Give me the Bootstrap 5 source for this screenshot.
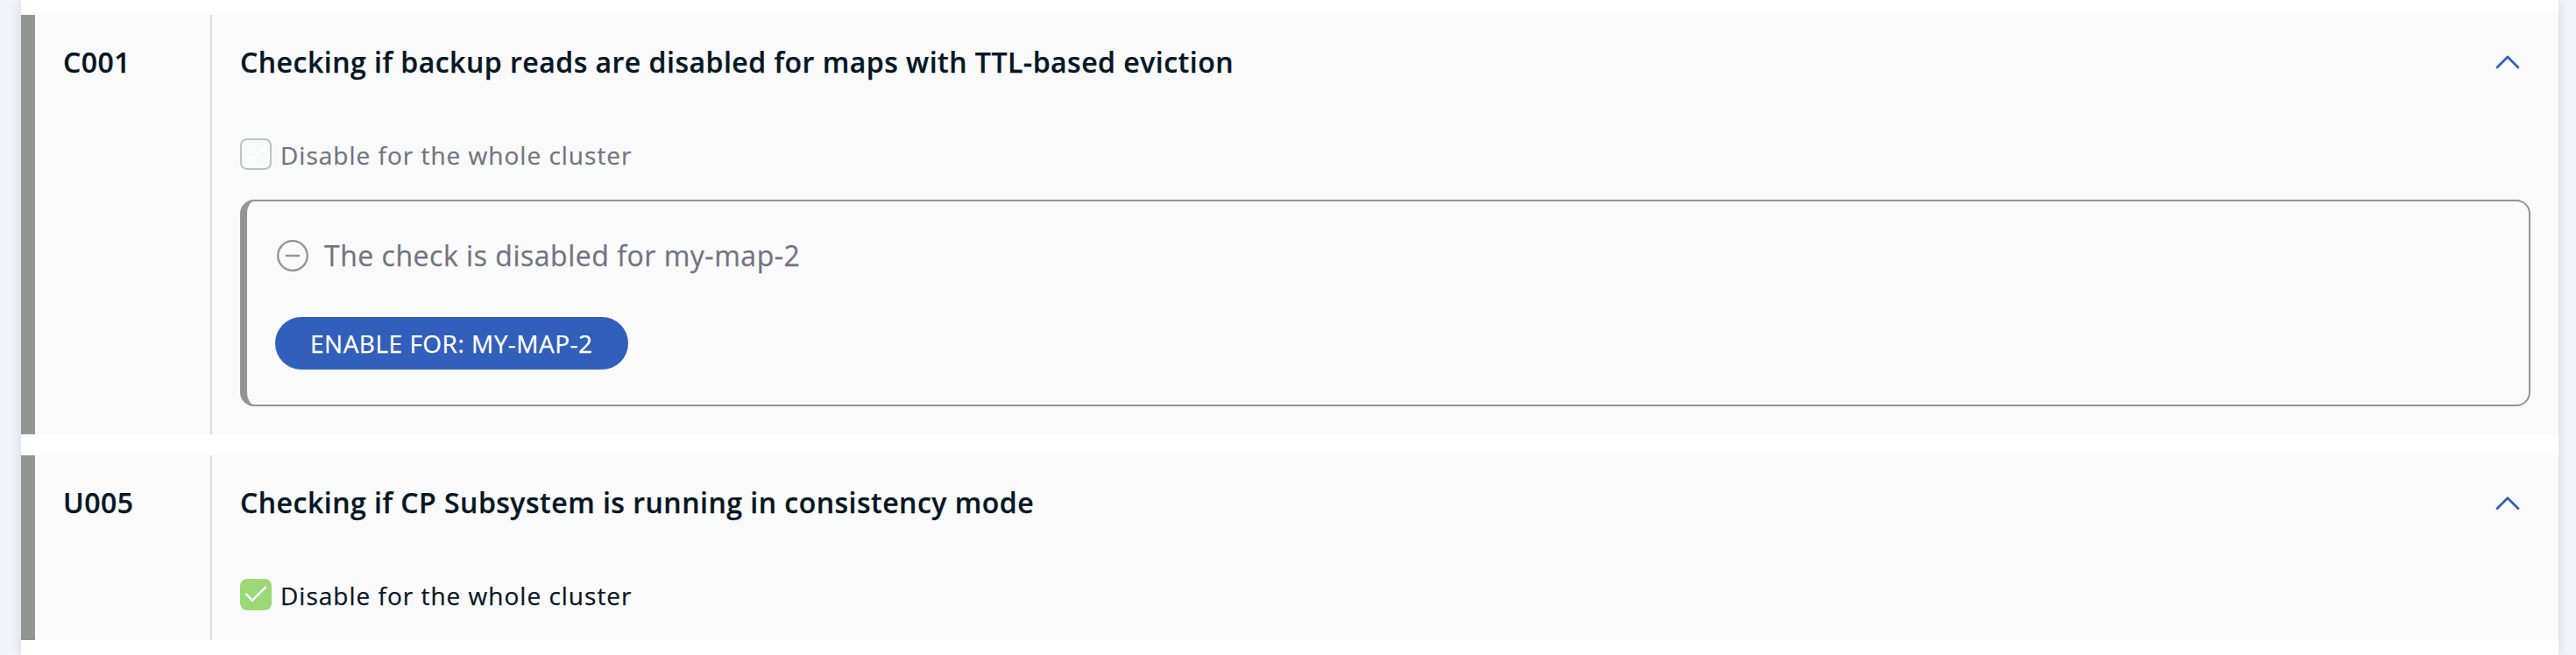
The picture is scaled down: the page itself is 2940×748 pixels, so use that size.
<!DOCTYPE html>
<html lang="en">
<head>
<meta charset="utf-8">
<title>Healthcheck</title>
<link href="https://cdn.jsdelivr.net/npm/bootstrap@5.3.0/dist/css/bootstrap.min.css" rel="stylesheet">
<style>
body { background: #f3f4f9; font-family: "Open Sans", sans-serif; color: #071724; height: 748px; overflow: hidden; -webkit-text-stroke: .25px; }
.panel { margin: 0 20px 0 24px; height: 748px; padding-top: 17px; gap: 24px; background: #fff; box-shadow: 0 0 14px rgba(7, 23, 52, .13); }
.check-item { background: #fafafa; border-left: 16px solid #949494; }
.check-code { width: 202px; padding: 30px 0 0 32px; border-right: 2px solid #dcdcdc; }
.check-main { padding: 30px 32px 32px; }
.check-title { font-size: 32px; line-height: 48px; font-weight: 600; letter-spacing: .49px; }
.check-toggle { margin-top: 63px; height: 38px; gap: 10px; font-size: 28px; line-height: 36px; letter-spacing: 1px; }
.check-toggle.muted, .notice { color: #707482; }
.tick { width: 36px; height: 36px; border-radius: 8px; border: 2px solid #b7c3cf; }
.tick.on { background: #9bd977; border-color: #9bd977; }
.tick svg { margin: -2px; }
.toggle-text { padding-top: 1px; }
.notice { margin-top: 32px; height: 236px; border: 2px solid #949494; border-left-width: 8px; border-radius: 16px; padding: 38px 32px; letter-spacing: .52px; }
.notice-text { font-size: 32px; line-height: 48px; gap: 18px; padding-left: 2px; }
.btn-enable { margin-top: 46px; height: 60px; border: 0; border-radius: 30px; padding: 0 40px; background: #325fbb; color: #fff; font-size: 28px; line-height: 60px; letter-spacing: .5px; }
.btn-enable:hover { background: #2a51a1; color: #fff; }
.chevron { margin: 14px 8px 0 0; }
</style>
</head>
<body>
<main class="panel d-flex flex-column">
  <section class="check-item d-flex">
    <div class="check-code check-title flex-shrink-0">C001</div>
    <div class="check-main flex-grow-1">
      <div class="d-flex justify-content-between align-items-start">
        <div class="check-title">Checking if backup reads are disabled for maps with TTL-based eviction</div>
        <svg class="chevron" width="36" height="20" viewBox="0 0 36 20" fill="none" stroke="#325fbb" stroke-width="2.8" stroke-linecap="round" stroke-linejoin="round"><path d="M6 16 18 4 30 16"/></svg>
      </div>
      <div class="check-toggle muted d-flex">
        <span class="tick flex-shrink-0"><svg class="d-block" width="36" height="36" fill="none" stroke="#fff" stroke-width="2.4" stroke-linecap="round" stroke-linejoin="round"><path d="M7 17.7 14 24.7 29 9.7"/></svg></span>
        <span class="toggle-text">Disable for the whole cluster</span>
      </div>
      <div class="notice">
        <div class="notice-text d-flex align-items-center">
          <svg width="36" height="36" fill="none" stroke="#949494" stroke-width="2.3" stroke-linecap="round"><circle cx="18" cy="18" r="16.8"/><path d="M11 18H25"/></svg>
          <span>The check is disabled for my-map-2</span>
        </div>
        <button type="button" class="btn btn-enable">ENABLE FOR: MY-MAP-2</button>
      </div>
    </div>
  </section>
  <section class="check-item d-flex">
    <div class="check-code check-title flex-shrink-0">U005</div>
    <div class="check-main flex-grow-1">
      <div class="d-flex justify-content-between align-items-start">
        <div class="check-title">Checking if CP Subsystem is running in consistency mode</div>
        <svg class="chevron" width="36" height="20" viewBox="0 0 36 20" fill="none" stroke="#325fbb" stroke-width="2.8" stroke-linecap="round" stroke-linejoin="round"><path d="M6 16.7 18 4.7 30 16.7"/></svg>
      </div>
      <div class="check-toggle d-flex">
        <span class="tick on flex-shrink-0"><svg class="d-block" width="36" height="36" fill="none" stroke="#fff" stroke-width="2.4" stroke-linecap="round" stroke-linejoin="round"><path d="M7 17.7 14 24.7 29 9.7"/></svg></span>
        <span class="toggle-text">Disable for the whole cluster</span>
      </div>
    </div>
  </section>
</main>
<script src="https://cdn.jsdelivr.net/npm/bootstrap@5.3.0/dist/js/bootstrap.bundle.min.js"></script>
</body>
</html>
